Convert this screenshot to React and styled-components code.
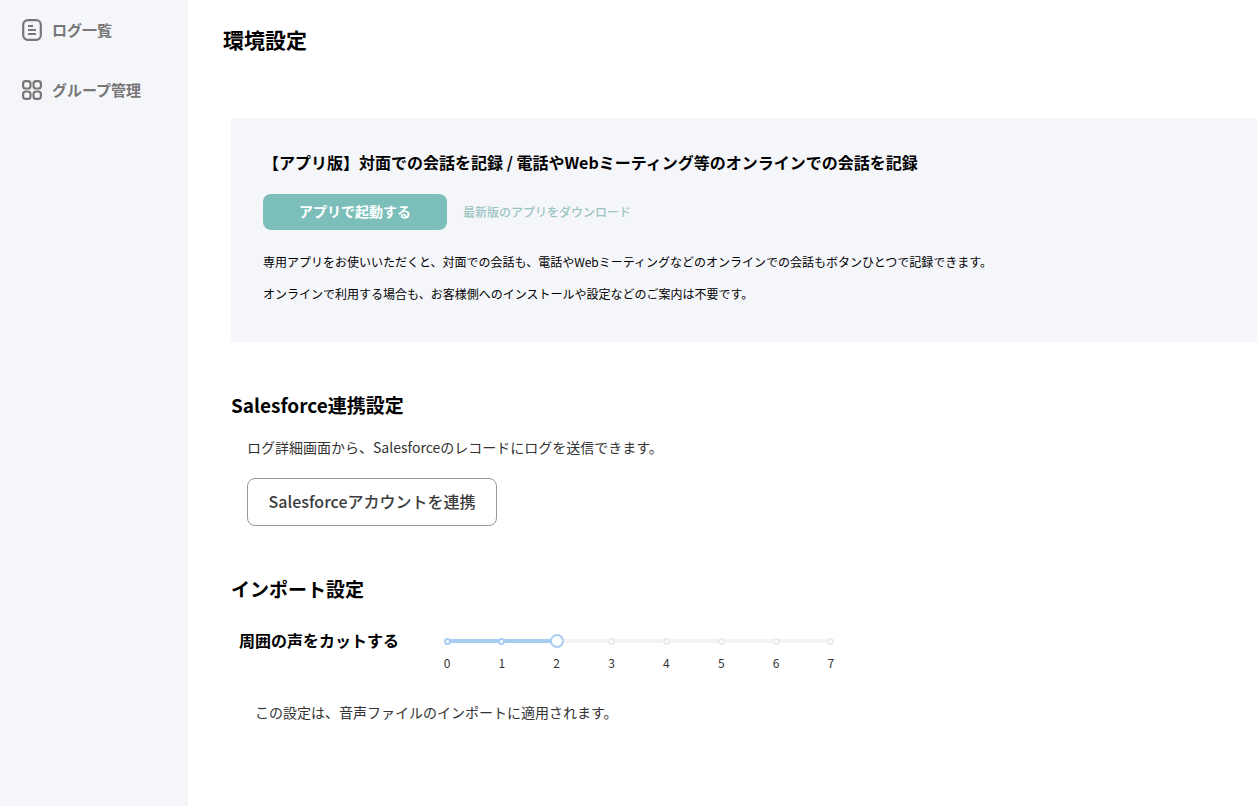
import styled, { createGlobalStyle } from 'styled-components';

const marks = [0, 1, 2, 3, 4, 5, 6, 7];
const sliderValue = 2;

const App = () => {
  return (
    <>
      <GlobalStyle />
      <Page>
        <Sidebar>
          <NavItem>
            <svg width="20" height="22" viewBox="0 0 20 22" fill="none" stroke="#777" strokeWidth="2.2">
              <rect x="1.2" y="1.2" width="17.6" height="19.6" rx="4.5" />
              <path d="M6 7h5M6 11h8M6 15h8" strokeWidth="2" />
            </svg>
            <NavLabel>ログ一覧</NavLabel>
          </NavItem>
          <NavItem>
            <svg width="20" height="20" viewBox="0 0 20 20" fill="none" stroke="#777" strokeWidth="2.2">
              <rect x="1.1" y="1.1" width="7.4" height="7.4" rx="2.6" />
              <rect x="11.5" y="1.1" width="7.4" height="7.4" rx="2.6" />
              <rect x="1.1" y="11.5" width="7.4" height="7.4" rx="2.6" />
              <rect x="11.5" y="11.5" width="7.4" height="7.4" rx="2.6" />
            </svg>
            <NavLabel>グループ管理</NavLabel>
          </NavItem>
        </Sidebar>
        <Main>
          <PageTitle>環境設定</PageTitle>
          <AppPanel>
            <PanelTitle>【アプリ版】対面での会話を記録 / 電話やWebミーティング等のオンラインでの会話を記録</PanelTitle>
            <ActionRow>
              <LaunchButton>アプリで起動する</LaunchButton>
              <DownloadLink>最新版のアプリをダウンロード</DownloadLink>
            </ActionRow>
            <PanelText>専用アプリをお使いいただくと、対面での会話も、電話やWebミーティングなどのオンラインでの会話もボタンひとつで記録できます。</PanelText>
            <PanelText>オンラインで利用する場合も、お客様側へのインストールや設定などのご案内は不要です。</PanelText>
          </AppPanel>
          <Section>
            <SectionTitle>Salesforce連携設定</SectionTitle>
            <SectionText>ログ詳細画面から、Salesforceのレコードにログを送信できます。</SectionText>
            <OutlineButton>Salesforceアカウントを連携</OutlineButton>
          </Section>
          <ImportSection>
            <SectionTitle>インポート設定</SectionTitle>
            <SliderRow>
              <SliderLabel>周囲の声をカットする</SliderLabel>
              <Slider>
                <Rail>
                  <Track style={{ width: `${(sliderValue / 7) * 100}%` }} />
                  <Dots>
                    {marks.map((m) => (
                      <Dot key={m} $active={m <= sliderValue} $current={m === sliderValue} />
                    ))}
                  </Dots>
                </Rail>
                <Marks>
                  {marks.map((m) => (
                    <Mark key={m}>{m}</Mark>
                  ))}
                </Marks>
              </Slider>
            </SliderRow>
            <ImportNote>この設定は、音声ファイルのインポートに適用されます。</ImportNote>
          </ImportSection>
        </Main>
      </Page>
    </>
  );
};

const GlobalStyle = createGlobalStyle`
  html, body {
    margin: 0;
    padding: 0;
    background: #fff;
    overflow: hidden;
  }
  * {
    box-sizing: border-box;
  }
  body {
    font-family: "Noto Sans CJK JP", "Noto Sans", sans-serif;
    color: #000;
  }
`;

const Page = styled.div`
  width: 1257px;
  height: 806px;
  display: flex;
  overflow: hidden;
`;

const Sidebar = styled.nav`
  width: 188px;
  flex-shrink: 0;
  background: #f5f6fa;
  padding: 0 0 0 22px;
`;

const NavItem = styled.div`
  height: 60px;
  display: flex;
  align-items: center;
  gap: 10px;
`;

const NavLabel = styled.span`
  font-size: 15px;
  line-height: 20px;
  font-weight: 700;
  color: #777;
  margin-top: -1px;
`;

const Main = styled.main`
  flex: 1;
  min-width: 0;
  padding: 0 0 0 36px;
`;

const PageTitle = styled.h1`
  margin: 0 0 0 -1px;
  padding-top: 24px;
  height: 118px;
  font-size: 21px;
  line-height: 30px;
  font-weight: 700;
`;

const AppPanel = styled.section`
  margin-left: 7px;
  height: 224px;
  background: #f5f6fa;
  padding: 32px 32px 0;
`;

const PanelTitle = styled.h2`
  margin: 0;
  font-size: 16px;
  line-height: 24px;
  font-weight: 700;
  white-space: nowrap;
`;

const ActionRow = styled.div`
  display: flex;
  align-items: center;
  gap: 16px;
  margin: 20px 0 23px;
`;

const LaunchButton = styled.button`
  width: 184px;
  height: 36px;
  padding: 0 0 2px;
  border: none;
  border-radius: 8px;
  background: #7cbfba;
  color: #fff;
  font-family: inherit;
  font-size: 14px;
  font-weight: 700;
`;

const DownloadLink = styled.a`
  font-size: 12px;
  font-weight: 500;
  color: #9cc5c2;
  margin-top: -2px;
`;

const PanelText = styled.p`
  margin: 0 0 14px;
  font-size: 12px;
  line-height: 18px;
  white-space: nowrap;
`;

const Section = styled.section`
  margin: 50px 0 0 7px;
`;

const SectionTitle = styled.h2`
  margin: 0;
  font-size: 19px;
  line-height: 26px;
  font-weight: 700;
`;

const SectionText = styled.p`
  margin: 19px 0 0 16px;
  font-size: 14px;
  line-height: 21px;
  color: #333;
`;

const OutlineButton = styled.button`
  display: block;
  margin: 20px 0 0 16px;
  width: 250px;
  height: 48px;
  padding: 0 0 2px;
  background: #fff;
  border: 1px solid #999;
  border-radius: 8px;
  font-family: inherit;
  font-size: 16px;
  font-weight: 500;
  color: #3c3c3c;
`;

const ImportSection = styled.section`
  margin: 50px 0 0 7px;
`;

const SliderRow = styled.div`
  display: flex;
  margin: 28px 0 0 8px;
`;

const SliderLabel = styled.div`
  width: 208px;
  font-size: 16px;
  line-height: 20px;
  font-weight: 700;
`;

const Slider = styled.div`
  width: 384px;
  padding-top: 9px;
`;

const Rail = styled.div`
  position: relative;
  height: 4px;
  border-radius: 2px;
  background: #f3f3f3;
`;

const Track = styled.div`
  height: 4px;
  border-radius: 2px;
  background: #a9cdf2;
`;

const Dots = styled.div`
  position: absolute;
  inset: 0 -3.5px;
  display: flex;
  justify-content: space-between;
  align-items: center;
`;

const Dot = styled.span`
  width: ${(p) => (p.$current ? '14px' : '7px')};
  height: ${(p) => (p.$current ? '14px' : '7px')};
  margin: 0 ${(p) => (p.$current ? '-3.5px' : '0')};
  border-radius: 50%;
  background: #fff;
  border: 2px solid ${(p) => (p.$active ? '#a9cdf2' : '#ebebeb')};
`;

const Marks = styled.div`
  display: flex;
  justify-content: space-between;
  margin: 11px -3.5px 0;
`;

const Mark = styled.span`
  width: 7px;
  display: flex;
  justify-content: center;
  font-size: 12px;
  line-height: 18px;
  color: #333;
`;

const ImportNote = styled.p`
  margin: 30px 0 0 24px;
  font-size: 14px;
  line-height: 21px;
  color: #333;
`;

export default App;
